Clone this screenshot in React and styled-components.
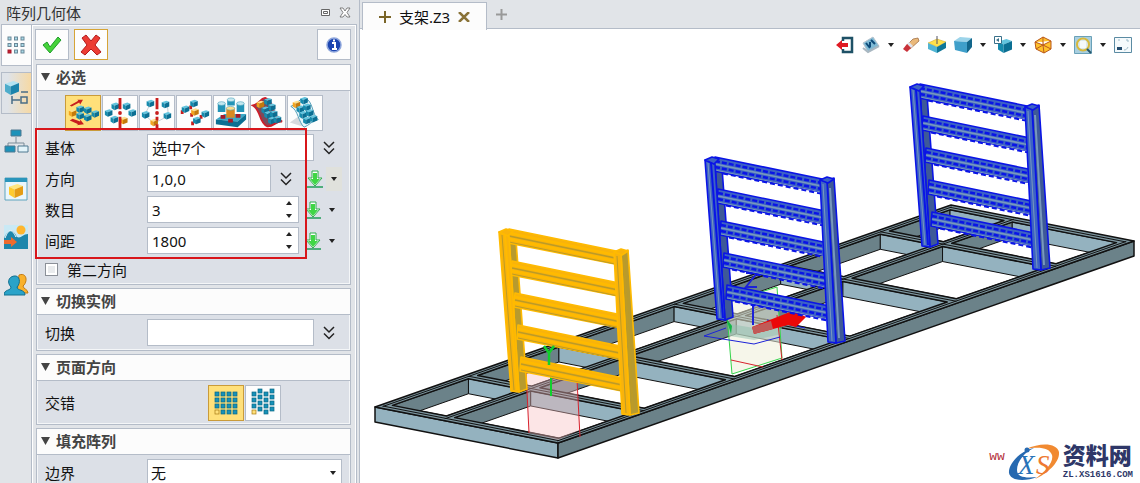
import React, { useState } from 'react';
import styled, { createGlobalStyle } from 'styled-components';

const GlobalStyle = createGlobalStyle`
  * {
    box-sizing: border-box;
  }

  body {
    margin: 0;
    color: #111;
    background: #fff;
    font-family: 'Noto Sans', 'Noto Sans CJK SC', sans-serif;
    font-size: 15px;
  }

  button, input, select {
    font: inherit;
    color: inherit;
  }
`;

const Shell = styled.div`
  display: flex;
  height: 100vh;
  overflow: hidden;
  background: #e1e4e8;
`;

const Side = styled.aside`
  display: flex;
  flex-direction: column;
  flex: none;
  width: 360px;
  border-right: 1px solid #b4bcc8;
`;

const TitleBar = styled.header`
  display: flex;
  flex: none;
  align-items: center;
  justify-content: space-between;
  height: 24px;
  padding: 0 8px 0 6px;
  color: #333;
`;

const WindowButtons = styled.div`
  display: flex;
  gap: 8px;
`;

const PlainButton = styled.button`
  display: flex;
  align-items: center;
  justify-content: center;
  padding: 0;
  border: 0;
  background: none;
`;

const SideBody = styled.div`
  display: flex;
  flex: 1;
  min-height: 0;
`;

const Rail = styled.nav`
  display: flex;
  flex-direction: column;
  flex: 0 0 32px;
  gap: 6px;
  padding-left: 1px;
  border-right: 1px solid #b4bcc8;
`;

const RailButton = styled.button`
  display: flex;
  flex: none;
  align-items: center;
  justify-content: center;
  height: 42px;
  padding: 0;
  border: 1px solid ${(props) => (props.$look ? '#b4bcc8' : 'transparent')};
  border-right: 0;
  background: ${(props) =>
    props.$look === 'open' ? '#fcfcfc' : props.$look === 'hot' ? 'linear-gradient(to right, #dfe3e8 20%, #f6d9a4)' : 'none'};
`;

const Panel = styled.main`
  display: flex;
  flex: 1;
  flex-direction: column;
  gap: 3px;
  min-width: 0;
  margin-right: 2px;
  padding: 4px 5px 0 3px;
  border: 1px solid #b4bcc8;
  border-width: 1px 1px 0 0;
  box-shadow: inset -1px 1px 0 #fff, inset 1px 0 0 #fff;
`;

const Actions = styled.div`
  display: flex;
  flex: none;
  gap: 5px;
  height: 32px;
`;

const ActionButton = styled.button`
  display: flex;
  align-items: center;
  justify-content: center;
  width: 34px;
  height: 31px;
  padding: 0;
  margin-left: ${(props) => (props.$last ? 'auto' : '0')};
  background: #fdfdfd;
  border: 1px solid ${(props) => (props.$hot ? '#d6a436' : '#b4bcc8')};
`;

const Group = styled.section`
  flex: none;
  margin-left: 1px;
  border: 1px solid #b4bcc8;
  background: #dce0e7;
  box-shadow: inset 0 0 0 1px #f4f6f8;
`;

const GroupTitle = styled.h2`
  display: flex;
  align-items: center;
  gap: 6px;
  height: 26px;
  margin: 0;
  padding: 0 0 2px 4px;
  border-bottom: 1px solid #b4bcc8;
  background: #fcfcfc;
  color: #444;
  font-size: 15px;
  font-weight: 700;
`;

const GroupBody = styled.div`
  display: flex;
  flex-direction: column;
  gap: 4px;
  padding: 4px 4px 4px 8px;
`;

const Modes = styled.div`
  display: flex;
  gap: 1px;
  height: 35px;
  padding-left: ${(props) => props.$indent};
`;

const ModeButton = styled.button`
  flex: none;
  width: 36px;
  height: 36px;
  padding: 0;
  border: 1px solid ${(props) => (props.$on ? '#c99b3a' : '#b4bcc8')};
  background: ${(props) => (props.$on ? '#ffe07a' : '#fdfdfd')};

  & svg {
    display: block;
  }
`;

const Row = styled.div`
  display: flex;
  align-items: center;
  min-height: 27px;
`;

const Label = styled.label`
  flex: 0 0 102px;
`;

const Box = styled.div`
  display: flex;
  flex: none;
  width: ${(props) => props.$width};
  height: 27px;
  border: 1px solid #b4bcc8;
  background: #fff;
`;

const TextInput = styled.input`
  flex: 1;
  width: 0;
  padding: 0 4px;
  border: 0;
  outline: 0;
  background: none;
`;

const Spinner = styled.div`
  display: flex;
  flex-direction: column;
  width: 18px;

  & button {
    flex: 1;
  }
`;

const MoreButton = styled(PlainButton)`
  width: 30px;
  height: 24px;
`;

const Pick = styled(PlainButton)`
  width: 16px;
  height: 24px;
  margin-left: 6px;
`;

const PickArrow = styled(PlainButton)`
  width: 16px;
  height: 24px;
  margin-left: 3px;
  background: ${(props) => (props.$lit ? '#e0e1dc' : 'none')};
`;

const CheckRow = styled.div`
  display: flex;
  align-items: center;
  gap: 9px;
  height: 22px;

  & input {
    appearance: none;
    width: 13px;
    height: 13px;
    margin: 0;
    border: 1px solid #8b9098;
    background: #e9ebed;
    box-shadow: inset 0 0 0 2px #fff;
  }
`;

const SelectWrap = styled.div`
  display: grid;
  flex: 0 0 195px;
  align-items: center;
  height: 27px;
  border: 1px solid #b4bcc8;
  background: #fff;

  & select, & svg {
    grid-area: 1 / 1;
  }

  & select {
    appearance: none;
    height: 25px;
    padding: 0 3px;
    border: 0;
    background: none;
  }

  & svg {
    justify-self: end;
    margin-right: 5px;
    pointer-events: none;
  }
`;

const Required = styled.div`
  position: relative;
  display: flex;
  flex-direction: column;
  gap: 4px;
`;

const Highlight = styled.div`
  position: absolute;
  top: -6px;
  left: -10px;
  width: 272px;
  height: 131px;
  border: 2px solid #d8161b;
  pointer-events: none;
`;

const Work = styled.div`
  position: relative;
  display: flex;
  flex: 1;
  flex-direction: column;
  min-width: 0;
  background: #fff;
`;

const TabBar = styled.div`
  display: flex;
  flex: none;
  height: 29px;
  padding: 2px 0 0 2px;
  background: #e1e4e8;
  border-bottom: 1px solid #b4bcc8;
`;

const Tab = styled.div`
  display: flex;
  align-items: center;
  gap: 8px;
  height: 28px;
  padding: 0 16px;
  border: 1px solid #b4bcc8;
  border-bottom: 0;
  background: #fcfcfc;
  white-space: nowrap;
`;

const NewTab = styled(PlainButton)`
  width: 28px;
  height: 24px;
`;

const ViewTools = styled.div`
  display: flex;
  flex: none;
  align-items: center;
  justify-content: flex-end;
  gap: 8px;
  height: 32px;
  padding-right: 8px;
`;

const ToolPair = styled.div`
  display: flex;
  align-items: center;
  gap: 8px;
`;

const Scene = styled.svg`
  display: block;
  width: 100%;
  flex: 1;
  min-height: 0;
`;

const Watermark = styled.div`
  position: absolute;
  right: 7px;
  bottom: 0;
  display: flex;
  align-items: center;
  color: #2e3768;
`;

const Site = styled.span`
  align-self: flex-start;
  padding-top: 6px;
  color: #b5323c;
  font: 13px 'Liberation Mono', monospace;
`;

const Brand = styled.div`
  display: flex;
  flex-direction: column;
  gap: 1px;
  padding-bottom: 3px;
`;

const BrandName = styled.span`
  font: 900 23px/26px 'Liberation Sans', 'Noto Sans CJK SC', sans-serif;
`;

const BrandSite = styled.span`
  font: bold 9px/10px 'Liberation Mono', monospace;
`;

const Down = () => (
  <svg width="6" height="4"><path d="M0 0h6L3 4z" fill="#222" /></svg>
);

const Up = () => (
  <svg width="6" height="4"><path d="M0 4h6L3 0z" fill="#222" /></svg>
);

const Chevrons = () => (
  <svg width="12" height="14" fill="none" stroke="#222" strokeWidth="1.5">
    <path d="M1 1l5 5 5-5M1 7.500l5 5 5-5" />
  </svg>
);

const PickIcon = () => (
  <svg width="16" height="18">
    <path d="M5 1h6v7h4l-7 8-7-8h4z" fill="#fff" stroke="#2fae4d" />
    <path d="M6 3h4v6h3L8 15 3 9h3z" fill="#3fd645" />
    <path d="M0 17h16" stroke="#219c57" strokeWidth="1.500" />
  </svg>
);

const blue = ['#62c4de', '#168bad', '#0b6f93'];
const orange = ['#ffe08a', '#f3a51f', '#c47a0c'];

const Cube = ({ x, y, s = 4, c = blue }) => (
  <g transform={`translate(${x} ${y}) scale(${s})`}>
    <path d="M-1-.6L.2-1 1-.7-.2-.2z" fill={c[0]} />
    <path d="M-1-.6L-.2-.2V1L-1 .5z" fill={c[1]} />
    <path d="M-.2-.2L1-.7V.5L-.2 1z" fill={c[2]} />
  </g>
);

const Cubes = ({ at, s = 4 }) => at.map(([x, y, hot]) => <Cube key={`${x}-${y}`} x={x} y={y} s={s} c={hot ? orange : blue} />);

const modes = [
  {
    name: '线性',
    art: (
      <>
        <path d="M4 10l9-5-1-1h6l-3 5-1-2-8 4zM4 26l9 4-2 1 8-1-4-5v2l-8-3z" fill="#c81e1e" />
        <Cubes at={[[7, 18, 1], [15, 14], [23, 15], [15, 21], [23, 23], [31, 19]]} />
      </>
    ),
  },
  {
    name: '圆形',
    art: (
      <>
        <Cubes at={[[13, 11], [25, 11], [6, 18], [31, 18], [12, 25], [22, 26, 1]]} />
        <path d="M18 2v12M18 22v12" stroke="#c81e1e" strokeWidth="3" />
        <circle cx="18" cy="18" r="2" fill="#c81e1e" />
      </>
    ),
  },
  {
    name: '多边形',
    art: (
      <>
        <path d="M11 8L5 20l10 9 15-8-1-12" fill="none" stroke="#c5ccd2" />
        <Cubes at={[[11, 8], [27, 9], [6, 20], [29, 21], [15, 28, 1]]} />
        <path d="M18 2v12M18 22v4M18 30v4" stroke="#c81e1e" strokeWidth="3" />
        <circle cx="18" cy="18" r="2" fill="#c81e1e" />
      </>
    ),
  },
  {
    name: '点到点',
    art: (
      <>
        <path d="M13 12h3M4 17h3M14 20h3M24 22h3M15 29h3" stroke="#c81e1e" strokeWidth="4" />
        <Cubes at={[[18, 8], [9, 14], [19, 17, 1], [30, 19], [21, 26]]} />
      </>
    ),
  },
  {
    name: '在阵列上',
    art: (
      <>
        <path d="M2 25l9-6h23l-9 8z" fill="#38a9c9" />
        <path d="M2 25l23 2v6L2 30zM25 27l9-8v6l-9 8z" fill="#0b6f93" />
        <path d="M7 22h5M15 26h5M23 21h5" stroke="#a51a2a" strokeWidth="4" />
        <path d="M4 8h8v9H4zM14 4h8v6h-8zM24 8h8v9h-8z" fill="#2394b7" />
        <path d="M13 13h9v10h-9z" fill="#d98a22" />
        <g fill="#c5e8f0" stroke="#3f9db8" strokeWidth=".6">
          <ellipse cx="8" cy="8" rx="4" ry="2" /><ellipse cx="18" cy="4" rx="4" ry="2" /><ellipse cx="28" cy="8" rx="4" ry="2" />
          <ellipse cx="17.500" cy="13" rx="4.500" ry="2" fill="#ffdf91" />
        </g>
      </>
    ),
  },
  {
    name: '在曲线上',
    art: (
      <>
        <path d="M2 10C10 8 9 3 15 2c9 2 7 20 18 25-7-1-9 6-16 5C8 28 11 15 2 10z" fill="#7c4a5b" stroke="#cc1f2b" strokeWidth="2" />
        <Cubes at={[[10, 9, 1], [18, 6], [22, 12], [15, 15], [18, 20], [24, 19], [22, 26], [28, 25]]} />
      </>
    ),
  },
  {
    name: '在面上',
    art: (
      <>
        <path d="M2 28l10-7 6 12z" fill="#d7dade" />
        <path d="M3 11C10 9 11 3 18 2c9 4 7 17 14 23-7 1-9 6-15 8-6-5-6-18-14-22z" fill="#e8f5fa" stroke="#4a9bb6" />
        <Cubes at={[[9, 9, 1], [17, 5], [13, 14], [20, 12], [16, 20], [23, 18], [20, 26], [27, 24]]} />
      </>
    ),
  },
];

const GridArt = ({ shift }) => (
  <svg width="34" height="34">
    {[0, 1, 2, 3].map((c) =>
      [0, 1, 2, 3].map((r) => {
        const base = c === 0 && r === 3;
        const y = 6 + r * 6 - (shift && c % 2 ? 3 : 0);
        return <rect key={`${c}${r}`} x={6 + c * 6} y={y} width="4" height="4" fill={base ? '#ffe07a' : '#1791b8'} stroke={base ? '#a57a16' : '#0b6883'} strokeWidth=".7" />;
      })
    )}
  </svg>
);

const railArt = [
  <>
    {[0, 1, 2].map((c) =>
      [0, 1, 2].map((r) => (
        <rect key={`${c}${r}`} x={4 + c * 6.500} y={4 + r * 6.500} width="3" height="3" fill={c === 0 && r === 2 ? '#c81e2e' : '#a9dbe8'} stroke={c === 0 && r === 2 ? '#a3182a' : '#6b8797'} />
      ))
    )}
  </>,
  <>
    <Cube x={8} y={7} s={7} c={['#b3e3f2', '#4daccb', '#1b84ac']} />
    <path d="M8 15v8M8 19h8M17 11h7M17 16h6v6h-6z" fill="none" stroke="#4a6d86" strokeWidth="1.500" />
  </>,
  <>
    <path d="M12 8v6M4 18v-4h16v4" fill="none" stroke="#7b8c98" />
    <path d="M7 1h10v6H7zM1 17h10v6H1z" fill="#1d92b9" stroke="#4f7890" />
    <path d="M14 17h10v6H14z" fill="#e3f4fa" stroke="#4f7890" />
  </>,
  <>
    <path d="M1 1h22v22H1z" fill="#eaf6fb" stroke="#5ea4bd" />
    <path d="M1 1h22v4H1z" fill="#2a95bb" />
    <Cube x={12} y={14} s={7} c={['#ffe680', '#ffcb2e', '#e59d15']} />
  </>,
  <>
    <path d="M0 0h24v24H0z" fill="#c9e9f5" />
    <path d="M0 13C5 3 9 4 13 12c4 2 6-3 11-3v15H0z" fill="#1d86ac" />
    <path d="M1 13C5 3 8 4 12 12" fill="none" stroke="#fff" />
    <circle cx="17" cy="5" r="4.500" fill="#ffb52e" />
    <path d="M0 15h7v-3l6 5-6 5v-3H0z" fill="#ee6b2d" />
  </>,
  <>
    <path d="M15 2c8-3 9 7 4 11 0 3 5 3 5 7H13z" fill="#f9b12c" stroke="#c27a12" />
    <path d="M10 3c6-1 7 7 3 11 0 4 8 2 8 8H0c0-6 7-4 7-8-4-4-3-10 3-11z" fill="#2aa3c9" stroke="#12708f" />
  </>,
];
const railNames = ['阵列', '管理器', '装配', '视图', '视觉', '用户'];

const tools = [
  { name: '退出', art: <><path d="M7 5V2h9v14H7v-3" fill="none" stroke="#1e5166" strokeWidth="2.500" /><path d="M0 9l6-5v3h6v4H6v3z" fill="#e01b24" /></> },
  { name: '显示', more: true, art: <><path d="M1 7l10-6 6 9-11 6z" fill="#7fbad5" stroke="#b8c4ce" /><path d="M1 12l5 4 11-6" fill="none" stroke="#a9b7c1" strokeWidth="2" /><path d="M4 7l4 5M8 6v5M9 4l4 4" stroke="#0d4a78" strokeWidth="2" /></> },
  { name: '擦除', art: <><path d="M11 3l5-1 1 3-9 8-4-3z" fill="#eab97b" stroke="#97633a" strokeWidth=".7" /><path d="M7 6l4 4-2 2-4-4z" fill="#dfe3ee" /><path d="M5 8l4 4-4 4-4-3z" fill="#c9323a" /></> },
  { name: '基准面', art: <><path d="M0 7l9-4 9 3-9 5z" fill="#ffe14a" stroke="#c9a21f" strokeWidth=".5" /><path d="M0 7l9 4v6L0 13z" fill="#51b5d3" /><path d="M9 11l9-5v6l-9 5z" fill="#0f7798" /><path d="M9 0v8" stroke="#556" /></> },
  { name: '着色', more: true, art: <><path d="M0 5l6-4 12 1-5 4z" fill="#9cd4ea" /><path d="M0 5l13 1v11L1 14z" fill="#3f9fca" /><path d="M13 6l5-4v9l-5 6z" fill="#12668b" /></> },
  { name: '视图方向', more: true, art: <><Cube x={11} y={10} s={7} /><path d="M.5.5h7v7h-7z" fill="#fff" stroke="#39708a" /><path d="M5 2L2 4l3 2z" fill="#39708a" /></> },
  { name: '线框', more: true, art: <path d="M1 6l8-5 8 4v8l-7 4-8-4zM1 6l8 3 8-4M9 1v8l1 8M9 9l8 4M9 9l-7 4" fill="#ffc22b" stroke="#b9571a" /> },
  { name: '缩放', more: true, art: <><path d="M.5.5h17v17H.5z" fill="#a9cfe0" stroke="#6aa1b8" /><circle cx="9" cy="8.500" r="6" fill="#dce9ee" stroke="#d7b93c" strokeWidth="2" /><path d="M6 5h6v7H6z" fill="#fff" opacity=".7" /><path d="M13 13l4 4" stroke="#28566b" strokeWidth="2" /></> },
  { name: '全屏', art: <><path d="M.5 1.500h17v15H.5z" fill="#f5fafc" stroke="#5b8ba3" /><path d="M3 11h5v3H3z" fill="#234b6d" /><path d="M4 4h2M12 4h2v2M14 11c-1 2-2 3-4 3" fill="none" stroke="#9bb9c7" /></> },
];

// the base frame is a parallel projection: u runs along it, v across it
const pt = (u, v, h = 0) => [375 + 576 * u + 183 * v, 407 - 202 * u + 36 * v + h];
const poly = (...points) => points.map((p) => p.join(',')).join(' ');

const crossBeams = [0, 0.148, 0.305, 0.505, 0.69, 0.863, 0.984];
const longBeams = [0, 0.34, 0.955];
const DU = 0.016;
const DV = 0.045;
const DEPTH = 15;

const Frame = () => {
  const cells = [];
  for (let i = crossBeams.length - 2; i >= 0; i--) {
    for (let j = 0; j < 2; j++) {
      cells.push([crossBeams[i] + DU, crossBeams[i + 1], longBeams[j] + DV, longBeams[j + 1]]);
    }
  }
  return (
    <g strokeLinejoin="round">
      <polygon points={poly(pt(0, 0), pt(0, 1), pt(0, 1, DEPTH), pt(0, 0, DEPTH))} fill="#94b2bf" stroke="#111" strokeWidth="1.500" />
      <polygon points={poly(pt(0, 1), pt(1, 1), pt(1, 1, DEPTH), pt(0, 1, DEPTH))} fill="#6b8289" stroke="#111" strokeWidth="1.500" />
      <polygon points={poly(pt(0, 0), pt(1, 0), pt(1, 1), pt(0, 1))} fill="#7c959e" stroke="#111" strokeWidth="1.500" />
      {cells.map(([a, b, c, d], i) => {
        const hole = poly(pt(a, c), pt(b, c), pt(b, d), pt(a, d));
        return (
          <g key={i}>
            <clipPath id={`cell${i}`}><polygon points={hole} /></clipPath>
            <g clipPath={`url(#cell${i})`} stroke="#111">
              <polygon points={hole} fill="#fff" />
              <polygon points={poly(pt(a, c), pt(b, c), pt(b, c, DEPTH), pt(a, c, DEPTH))} fill="#6b8289" />
              <polygon points={poly(pt(b, c), pt(b, d), pt(b, d, DEPTH), pt(b, c, DEPTH))} fill="#94b2bf" />
            </g>
            <polygon points={hole} fill="none" stroke="#111" strokeWidth="1.500" />
          </g>
        );
      })}
      <g fill="none" stroke="#111">
        {longBeams.map((v) => (
          <polyline key={v} points={poly(pt(0.006, v + 0.022), pt(0.994, v + 0.022))} />
        ))}
        {crossBeams.map((u) => (
          <polyline key={u} points={poly(pt(u + 0.008, 0.02), pt(u + 0.008, 0.98))} />
        ))}
      </g>
    </g>
  );
};

const rungs = [0, 1, 2, 3, 4];

const Rack = ({ x, y, solid }) => {
  const face = solid ? '#f9b30b' : '#3d63c4';
  const edge = solid ? '#ffba00' : '#0a14e6';
  const shade = solid ? '#b79a2e' : '#3e5998';
  const groove = solid ? '#bb9b28' : '#7898bd';
  return (
    <g transform={`translate(${x} ${y})`} stroke={edge} strokeWidth="1.600" strokeLinejoin="round">
      <path d="M10 6l7 4 11 149-8 3z" fill={shade} />
      {rungs.map((n) => (
        <g key={n} transform={`translate(${n * 3} ${n * 32})`}>
          <path d="M10-1l112 23-1 13L9 13z" fill={face} />
          <path d="M10 6l111 23" stroke={groove} />
          <path d="M10 3l111 23M10 9l111 23" stroke={edge} strokeWidth="2.500" strokeDasharray={solid ? 'none' : '5 2'} />
          <path d="M10 12l111 23" stroke={groove} strokeWidth="1" />
          {!solid && <path d="M18 15.500l102 21" strokeWidth="2" strokeDasharray="5 3" />}
        </g>
      ))}
      <path d="M0 2l10 4 10 156-8-1z" fill={face} />
      <path d="M3 5l12 155" stroke={groove} strokeWidth="1" />
      <path d="M6 5l12 155" strokeWidth="2" />
      <path d="M0 2l7-3 7 2-5 5z" fill={face} />
      <path d="M122 23l7-3 11 163-9 2z" fill={shade} />
      <path d="M125 30l9 150" stroke={groove} strokeWidth="2" />
      <path d="M115 22l7 1 9 162-8-1z" fill={face} />
      <path d="M118 26l9 157" stroke={groove} strokeWidth="1" />
      <path d="M115 22l7-3 7 2-6 4z" fill={face} />
    </g>
  );
};

const Model = () => (
  <Scene viewBox="360 61 780 422" preserveAspectRatio="xMidYMid meet" role="img" aria-label="支架">
    <Frame />
    <path d="M526 371l51 9 3 50-22 10-29-7z" fill="#f8bfc0" opacity=".4" />
    <path d="M526 371l3 62M577 380l3 57" stroke="#d8222d" />
    <path d="M551 375v21" stroke="#10d02c" strokeWidth="2" />
    <Rack x={499} y={230} solid />
    <path d="M544 346l5 7 5-7M549 353v12" fill="none" stroke="#10d02c" strokeWidth="2.500" />
    <path d="M726 303l51-16 5 71-50 16z" fill="#efefd8" opacity=".55" />
    <path d="M730 324l24 4 28-8v14l-28 6-24-4z" fill="#8fc0ad" opacity=".5" />
    <path d="M726 303l51-16 5 71-50 16z" fill="none" stroke="#35d34b" />
    <path d="M731 360l32 7M777 315l5 45" stroke="#d8222d" />
    <path d="M780 337l-26 7-50-8 22-8M767 320l38 8" fill="none" stroke="#1c22d8" />
    <path d="M752 327l38-15-1-4 17 9-10 10-8-2-34 9z" fill="#eb0808" />
    <path d="M752 327l2 7 19-5-2-8z" fill="#c05b58" />
    <path d="M746 273h11l-11 14h11M753 293v32" fill="none" stroke="#1c22d8" strokeWidth="2" />
    <path d="M726 318l6 8-1 8z" fill="#14b647" />
    <Rack x={705} y={158} />
    <Rack x={910} y={85} />
  </Scene>
);

const Section = ({ title, children }) => (
  <Group>
    <GroupTitle>
      <svg width="9" height="8"><path d="M0 0h9L4.500 8z" fill="#444" /></svg>
      {title}
    </GroupTitle>
    <GroupBody>{children}</GroupBody>
  </Group>
);

const NumberField = ({ id, label, start }) => {
  const [value, setValue] = useState(start);
  return (
    <Row>
      <Label htmlFor={id}>{label}</Label>
      <Box $width="152px">
        <TextInput id={id} value={value} onChange={(e) => setValue(Number(e.target.value) || 0)} />
        <Spinner>
          <PlainButton aria-label="增加" onClick={() => setValue(value + 1)}><Up /></PlainButton>
          <PlainButton aria-label="减少" onClick={() => setValue(value - 1)}><Down /></PlainButton>
        </Spinner>
      </Box>
      <Pick aria-label="拾取"><PickIcon /></Pick>
      <PickArrow aria-label="拾取选项"><Down /></PickArrow>
    </Row>
  );
};

const App = () => {
  const [mode, setMode] = useState(0);
  const [stagger, setStagger] = useState(0);

  return (
    <Shell>
      <GlobalStyle />
      <Side>
        <TitleBar>
          <span>阵列几何体</span>
          <WindowButtons>
            <PlainButton aria-label="还原">
              <svg width="11" height="10" fill="#fff" stroke="#666"><path d="M1.500 2.500h8v6h-8zM3.500 4.500h4v2h-4z" /></svg>
            </PlainButton>
            <PlainButton aria-label="关闭">
              <svg width="12" height="11" fill="#fff" stroke="#666" strokeWidth=".8"><path d="M1 1h3l2 3 2-3h3L8 5.500l3 4.500H8L6 7.500 4 10H1l3-4.500z" /></svg>
            </PlainButton>
          </WindowButtons>
        </TitleBar>
        <SideBody>
          <Rail>
            {railArt.map((art, i) => (
              <RailButton key={railNames[i]} aria-label={railNames[i]} $look={['open', 'hot'][i]}>
                <svg width="25" height="25">{art}</svg>
              </RailButton>
            ))}
          </Rail>
          <Panel>
            <Actions>
              <ActionButton aria-label="确定">
                <svg width="20" height="18"><path d="M1 9l4-3 3 5 8-10 3 3L8 17z" fill="#46d33a" stroke="#1f9d2a" /></svg>
              </ActionButton>
              <ActionButton $hot aria-label="取消">
                <svg width="22" height="22"><path d="M2 4l4-3 5 6 5-6 4 3-5 7 6 7-4 3-6-6-6 6-4-3 6-7z" fill="#ec3c33" stroke="#b21a1c" /></svg>
              </ActionButton>
              <ActionButton $last aria-label="帮助">
                <svg width="18" height="18">
                  <circle cx="9" cy="9" r="7" fill="#1c45b0" stroke="#8ea6dc" strokeWidth="1.500" />
                  <path d="M7 7h3v6M7 13h5M8 4.500h2" fill="none" stroke="#fff" strokeWidth="2" />
                </svg>
              </ActionButton>
            </Actions>
            <Section title="必选">
              <Modes $indent="20px">
                {modes.map((m, i) => (
                  <ModeButton key={m.name} aria-label={m.name} $on={mode === i} onClick={() => setMode(i)}>
                    <svg width="34" height="34" viewBox="0 0 36 36">{m.art}</svg>
                  </ModeButton>
                ))}
              </Modes>
              <Required>
                <Row>
                  <Label htmlFor="body">基体</Label>
                  <Box $width="167px"><TextInput id="body" defaultValue="选中7个" /></Box>
                  <MoreButton aria-label="更多"><Chevrons /></MoreButton>
                </Row>
                <Row>
                  <Label htmlFor="direction">方向</Label>
                  <Box $width="124px"><TextInput id="direction" defaultValue="1,0,0" /></Box>
                  <MoreButton aria-label="更多"><Chevrons /></MoreButton>
                  <Pick aria-label="拾取"><PickIcon /></Pick>
                  <PickArrow $lit aria-label="拾取选项"><Down /></PickArrow>
                </Row>
                <NumberField id="count" label="数目" start={3} />
                <NumberField id="spacing" label="间距" start={1800} />
                <Highlight />
              </Required>
              <CheckRow>
                <input type="checkbox" id="second" />
                <label htmlFor="second">第二方向</label>
              </CheckRow>
            </Section>
            <Section title="切换实例">
              <Row>
                <Label htmlFor="toggle">切换</Label>
                <Box $width="167px"><TextInput id="toggle" /></Box>
                <MoreButton aria-label="更多"><Chevrons /></MoreButton>
              </Row>
            </Section>
            <Section title="页面方向">
              <Row>
                <Label as="span">交错</Label>
                <Modes $indent="61px">
                  {[0, 1].map((n) => (
                    <ModeButton key={n} aria-label={n ? '交错排列' : '对齐排列'} $on={stagger === n} onClick={() => setStagger(n)}>
                      <GridArt shift={n === 1} />
                    </ModeButton>
                  ))}
                </Modes>
              </Row>
            </Section>
            <Section title="填充阵列">
              <Row>
                <Label htmlFor="boundary">边界</Label>
                <SelectWrap>
                  <select id="boundary"><option>无</option></select>
                  <Down />
                </SelectWrap>
              </Row>
            </Section>
          </Panel>
        </SideBody>
      </Side>
      <Work>
        <TabBar>
          <Tab>
            <svg width="12" height="12" stroke="#7a6528" strokeWidth="2"><path d="M6 0v12M0 6h12" /></svg>
            支架.Z3
            <PlainButton aria-label="关闭标签">
              <svg width="12" height="10" stroke="#8a7338" strokeWidth="2.500"><path d="M1 0l10 10M11 0L1 10" /></svg>
            </PlainButton>
          </Tab>
          <NewTab aria-label="新建标签">
            <svg width="11" height="11" stroke="#999" strokeWidth="2"><path d="M5.500 0v11M0 5.500h11" /></svg>
          </NewTab>
        </TabBar>
        <ViewTools>
          {tools.map((tool) => (
            <ToolPair key={tool.name}>
              <PlainButton aria-label={tool.name}>
                <svg width="18" height="18">{tool.art}</svg>
              </PlainButton>
              {tool.more && <PlainButton aria-label={`${tool.name}选项`}><Down /></PlainButton>}
            </ToolPair>
          ))}
        </ViewTools>
        <Model />
        <Watermark>
          <Site>ww</Site>
          <svg width="58" height="40" viewBox="0 0 58 40">
            <path d="M29 5C17 7 3 20 4 30c2 9 18 8 28 4-10 1-20 1-20-7C12 18 20 9 29 5z" fill="#2769b0" />
            <path d="M21 6C36-1 52 0 54 9c1 10-11 21-24 27C40 29 49 19 47 12 45 5 34 3 21 6z" fill="#f18a31" />
            <circle cx="22" cy="7" r="2.500" fill="#2769b0" />
            <text x="13" y="31" fontFamily="Liberation Serif" fontStyle="italic" fontSize="27" fill="#2873b8">X</text>
            <text x="31" y="31" fontFamily="Liberation Serif" fontStyle="italic" fontSize="27" fill="#ee7931">S</text>
          </svg>
          <Brand>
            <BrandName>资料网</BrandName>
            <BrandSite>ZL.XS1616.COM</BrandSite>
          </Brand>
        </Watermark>
      </Work>
    </Shell>
  );
};

export default App;
